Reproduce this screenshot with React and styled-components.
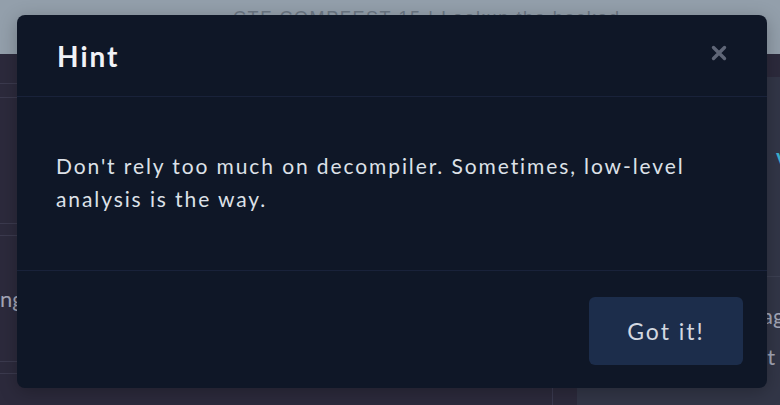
import styled, { createGlobalStyle } from "styled-components";

const GlobalStyle = createGlobalStyle`
  html, body {
    margin: 0;
    padding: 0;
    width: 780px;
    height: 405px;
    overflow: hidden;
    background: #2c2a3c;
    font-family: Lato, "Noto Sans", sans-serif;
  }
`;

const Page = styled.div`
  position: relative;
  width: 780px;
  height: 405px;
  overflow: hidden;
  display: flex;
  flex-direction: column;
`;

const TopBar = styled.div`
  height: 54px;
  flex-shrink: 0;
  background: #939fab;
  padding: 8px 0 0 233px;
  box-sizing: border-box;
  color: #6b7683;
  font-family: "Liberation Sans", sans-serif;
  font-size: 18px;
  letter-spacing: 1.6px;
`;

const Content = styled.div`
  flex: 1;
  display: flex;
  gap: 24px;
`;

const LeftColumn = styled.div`
  width: 552px;
  flex-shrink: 0;
  padding-top: 29px;
  display: flex;
  flex-direction: column;
  gap: 11px;
  border-right: 1px solid #3a3a50;
`;

const Rule = styled.div`
  height: 13px;
  flex-shrink: 0;
  border-top: 1px solid #3b3a4e;
  margin-bottom: -11px;
`;

const Row = styled.div`
  height: 127px;
  box-sizing: border-box;
  flex-shrink: 0;
  border-top: 1px solid #3b3a4e;
  border-bottom: 1px solid #3b3a4e;
  display: flex;
  align-items: center;
  color: #a4a6b6;
  font-size: 22px;
`;

const SidePanel = styled.div`
  flex: 1;
  min-width: 0;
  overflow: hidden;
  margin-top: 23px;
  background: #323647;
  display: flex;
  flex-direction: column;
`;

const PanelTop = styled.div`
  height: 200px;
  border-bottom: 1px solid #3c4052;
  padding: 66px 0 0 199px;
  box-sizing: border-box;
  white-space: nowrap;
`;

const PanelText = styled.div`
  padding: 25px 0 0 185px;
  color: #a4a8b8;
  font-size: 22px;
  display: flex;
  flex-direction: column;
  gap: 14px;
  white-space: nowrap;
`;

const Accent = styled.span`
  color: #3ab0d0;
  font-size: 22px;
  font-weight: 700;
`;

const Overlay = styled.div`
  position: absolute;
  inset: 0;
  display: flex;
  justify-content: flex-start;
  padding: 15px 0 0 17px;
`;

const Modal = styled.div`
  width: 750px;
  height: 373px;
  background: #0f1727;
  border-radius: 8px;
  display: flex;
  flex-direction: column;
  box-shadow: 0 4px 18px rgba(0, 0, 0, 0.25);
`;

const Header = styled.div`
  height: 82px;
  box-sizing: border-box;
  border-bottom: 1px solid #19223a;
  display: flex;
  align-items: center;
  justify-content: space-between;
  padding: 0 40px 0 40px;
`;

const Title = styled.h2`
  margin: 0;
  color: #f1f2f6;
  font-size: 28px;
  font-weight: 700;
  letter-spacing: 2px;
`;

const CloseButton = styled.button`
  background: none;
  border: none;
  padding: 0;
  width: 16px;
  height: 16px;
  display: flex;
  align-items: center;
  justify-content: center;
  cursor: pointer;
  margin-top: -6px;
`;

const Body = styled.div`
  height: 174px;
  box-sizing: border-box;
  border-bottom: 1px solid #19223a;
  padding: 52px 39px 0 39px;
  color: #dde1e8;
  font-size: 21px;
  line-height: 33px;
  letter-spacing: 1.9px;
`;

const Footer = styled.div`
  flex: 1;
  display: flex;
  justify-content: flex-end;
  align-items: flex-start;
  padding: 26px 24px 0 0;
`;

const Button = styled.button`
  width: 154px;
  height: 68px;
  background: #1c2d4b;
  border: none;
  border-radius: 6px;
  color: #d3d8e0;
  font-family: Lato, "Noto Sans", sans-serif;
  font-size: 23px;
  letter-spacing: 2px;
  cursor: pointer;
`;

export default function App() {
  return (
    <>
      <GlobalStyle />
      <Page>
        <TopBar>CTF COMPFEST 15 | Lookup the hacked</TopBar>
        <Content>
          <LeftColumn>
            <Rule />
            <Row />
            <Row>ng</Row>
            <Row />
          </LeftColumn>
          <SidePanel>
            <PanelTop>
              <Accent>v</Accent>
            </PanelTop>
            <PanelText>
              <span>ag</span>
              <span>it</span>
            </PanelText>
          </SidePanel>
        </Content>
        <Overlay>
          <Modal>
            <Header>
              <Title>Hint</Title>
              <CloseButton aria-label="Close">
                <svg width="16" height="16" viewBox="0 0 16 16">
                  <path
                    d="M2.5 2.5 L13.5 13.5 M13.5 2.5 L2.5 13.5"
                    stroke="#5f6677"
                    strokeWidth="3.4"
                    strokeLinecap="round"
                  />
                </svg>
              </CloseButton>
            </Header>
            <Body>
              Don't rely too much on decompiler. Sometimes, low-level analysis
              is the way.
            </Body>
            <Footer>
              <Button>Got it!</Button>
            </Footer>
          </Modal>
        </Overlay>
      </Page>
    </>
  );
}
